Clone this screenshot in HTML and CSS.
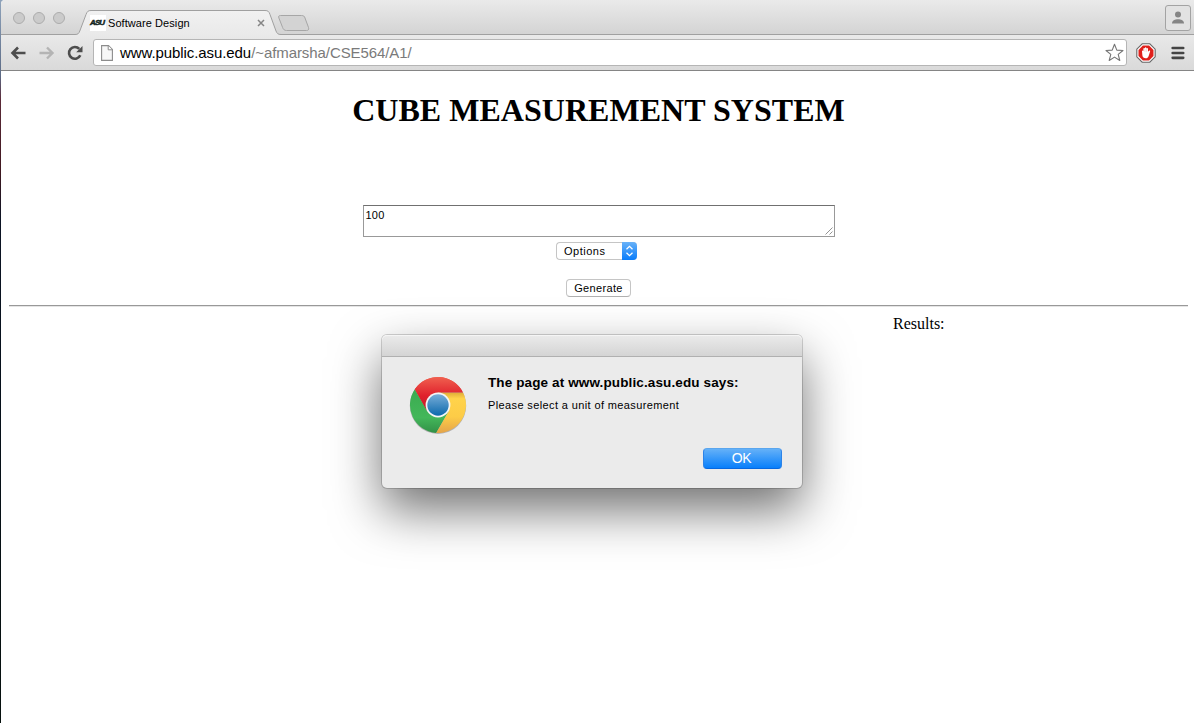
FILE: index.html
```html
<!DOCTYPE html>
<html lang="en">
<head>
<meta charset="utf-8">
<title>Software Design</title>
<link rel="stylesheet" href="styles.css">
</head>
<body>
<div class="desktop">
  <div class="window">
    <header class="tabstrip">
      <div class="lights"><i></i><i></i><i></i></div>
      <div class="tab">
        <svg class="tab-shape" width="206" height="26" viewBox="0 0 206 26">
          <path d="M0 26V24.5C3 24.5 3.8 23.500 4.800 21L11 4.500C12.200 1.500 13 .5 16 .5H190C193 .5 194 1.500 195 4.500L201 21C202 23.500 203 24.500 206 24.500V26Z" fill="url(#tabfill)"/>
          <path d="M0 24.500C3 24.500 3.800 23.500 4.800 21L11 4.500C12.200 1.500 13 .5 16 .5H190C193 .5 194 1.500 195 4.500L201 21C202 23.500 203 24.500 206 24.500" fill="none" stroke="#a0a0a0"/>
          <defs><linearGradient id="tabfill" x2="0" y2="1"><stop stop-color="#f1f1f1"/><stop offset="1" stop-color="#e9e9e9"/></linearGradient></defs>
        </svg>
        <span class="favicon">ASU</span>
        <span class="tab-title">Software Design</span>
        <svg class="tab-close" width="8" height="8" viewBox="0 0 8 8"><path d="M1 1L7 7M7 1L1 7" stroke="#858585" stroke-width="1.500"/></svg>
      </div>
      <svg class="new-tab" width="34" height="18" viewBox="0 0 34 18"><path d="M3.500 1.500H24.500C26.500 1.500 27.500 2.200 28 4L31.500 13.500C32 15.500 31.500 16.500 29.500 16.500H9.500C7.500 16.500 6.300 15.500 5.600 13.500L1.900 4C1.300 2.200 1.800 1.500 3.500 1.500Z" fill="#d3d3d3" stroke="#a6a6a6"/></svg>
      <div class="profile"><svg width="14" height="14" viewBox="0 0 14 14" fill="#858585"><circle cx="7" cy="3.500" r="3"/><path d="M1 12.500C1 9.500 4 8.200 7 8.200S13 9.500 13 12.500Z"/></svg></div>
    </header>
    <nav class="toolbar">
      <svg class="nav-icon" width="16" height="16" viewBox="0 0 16 16"><path d="M15.500 8H2.500M8 2.500L2.500 8L8 13.500" fill="none" stroke="#4d4d4d" stroke-width="2.600"/></svg>
      <svg class="nav-icon forward" width="16" height="16" viewBox="0 0 16 16"><path d="M.5 8H13.500M8 2.500L13.500 8L8 13.500" fill="none" stroke="#b4b4b4" stroke-width="2.400"/></svg>
      <svg class="nav-icon reload" width="16" height="16" viewBox="0 0 16 16"><path d="M12.300 3.900A5.900 5.900 0 1 0 13.300 10.300" fill="none" stroke="#4d4d4d" stroke-width="2.600"/><path d="M15.500 1V7.300H9.200Z" fill="#4d4d4d"/></svg>
      <div class="omnibox">
        <svg class="page-icon" width="12" height="16" viewBox="0 0 12 16"><path d="M.6.6H7.500L11.400 4.500V15.400H.6Z" fill="#f7f7f7" stroke="#8c8c8c" stroke-width="1.100"/><path d="M7.200.8V4.800H11.200" fill="#fff" stroke="#8c8c8c"/></svg>
        <span class="url"><span class="host">www.public.asu.edu</span>/~afmarsha/CSE564/A1/</span>
        <svg class="star" width="19" height="19" viewBox="0 0 19 19"><path d="M9.500 1.300L11.800 7.100L18 7.500L13.200 11.400L14.800 17.500L9.500 14.100L4.200 17.500L5.800 11.400L1 7.500L7.200 7.100Z" fill="#fff" stroke="#757575" stroke-width="1.100" stroke-linejoin="round"/></svg>
      </div>
      <svg class="blocker" width="20" height="20" viewBox="0 0 20 20"><path d="M6.200.8H13.800L19.200 6.200V13.800L13.800 19.200H6.200L.8 13.800V6.200Z" fill="#fff" stroke="#666" stroke-width="1.100"/><path d="M6.900 2.500H13.100L17.500 6.900V13.100L13.100 17.500H6.900L2.500 13.100V6.900Z" fill="#e0201b"/><path d="M6 8.300C6 7.200 7.300 7.200 7.400 8.200V5.800C7.400 4.700 8.900 4.700 8.900 5.800V5C8.900 3.900 10.400 3.900 10.400 5V5.700C10.400 4.700 12 4.700 12 5.800V9L12.600 8C13.300 7 14.500 7.500 14.100 8.500L12.700 12.900C12.100 14.600 11.200 15.300 9.700 15.300C7.800 15.300 6.700 14.300 6.400 12.600Z" fill="#fff"/><path d="M8.900 6V9M10.400 6V9" stroke="#efb0ae" stroke-width=".4"/></svg>
      <svg class="menu" width="14" height="14" viewBox="0 0 14 14"><path d="M1.700 2H12.200M1.700 7H12.200M1.700 11.800H12.200" stroke="#444" stroke-width="2.700" stroke-linecap="round"/></svg>
    </nav>
    <main class="page">
      <h1>CUBE MEASUREMENT SYSTEM</h1>
      <div class="field">100<svg class="grip" width="8" height="8" viewBox="0 0 8 8"><path d="M.5 7.500L7.500 .5M4.500 7.500L7.500 4.500" stroke="#777" stroke-width=".8"/></svg></div>
      <div class="select"><span class="select-label">Options</span><span class="stepper"><svg width="9" height="12" viewBox="0 0 9 12"><path d="M1.500 4.300L4.500 1.400L7.500 4.300M1.500 7.700L4.500 10.600L7.500 7.700" fill="none" stroke="#fff" stroke-width="1.300"/></svg></span></div>
      <button class="generate">Generate</button>
      <hr>
      <div class="results">Results:</div>
    </main>
  </div>
  <section class="dialog" role="alertdialog">
    <div class="dialog-bar"></div>
    <div class="dialog-body">
      <svg class="chrome" width="60" height="60" viewBox="-30 -30 60 60">
        <defs>
          <linearGradient id="red" x2="0" y2="1"><stop stop-color="#f0604f"/><stop offset=".55" stop-color="#e0202c"/><stop offset="1" stop-color="#bf1d2a"/></linearGradient>
          <linearGradient id="green" x2="0" y2="1"><stop stop-color="#3bab50"/><stop offset=".65" stop-color="#43b75a"/><stop offset="1" stop-color="#329047"/></linearGradient>
          <linearGradient id="yellow" x2="0" y2="1"><stop stop-color="#e0ad38"/><stop offset=".15" stop-color="#ffd34b"/><stop offset=".6" stop-color="#fdcc47"/><stop offset="1" stop-color="#e5a44a"/></linearGradient>
          <linearGradient id="blue" x2="0" y2="1"><stop stop-color="#78add8"/><stop offset="1" stop-color="#0c69ac"/></linearGradient>
        </defs>
        <circle cy=".8" r="28.200" fill="#777" opacity=".5"/>
        <path d="M-23.200 -15.700A28 28 0 0 1 24.200 -14H0L-10.700 6.200Z" fill="url(#red)"/>
        <path d="M-23.200 -15.700L-10.700 6.200L10.700 6.200L-1.800 27.940A28 28 0 0 1 -23.200 -15.700Z" fill="url(#green)"/>
        <path d="M0 -12.400H25.100A28 28 0 0 1 -1.800 27.940L10.700 6.200Z" fill="url(#yellow)"/>
        <path d="M-23.200 -15.700A28 28 0 0 1 25.100 -12.400H0L-10.700 6.200Z" fill="url(#red)"/>
        <circle r="12.400" fill="#f5f5f5"/><circle r="10.700" fill="url(#blue)"/>
      </svg>
      <div class="message">
        <h2>The page at www.public.asu.edu says:</h2>
        <p>Please select a unit of measurement</p>
      </div>
      <button class="ok">OK</button>
    </div>
  </section>
</div>
</body>
</html>
```
FILE: styles.css
```css
* { box-sizing: border-box; }
body { margin: 0; font-family: "Liberation Sans", Arial, sans-serif; }
.desktop {
  position: relative;
  height: 723px;
  padding-left: 1px;
  overflow: hidden;
  background: linear-gradient(#8fa3bb 0, #5c6b86 75px, #5b2a38 100px, #401820 170px, #0c1424 220px, #06101a 400px, #07110e 723px);
}
.window { display: flex; flex-direction: column; height: 723px; background: #fff; border-top-left-radius: 4px; overflow: hidden; }
.tabstrip { display: flex; height: 35px; padding-left: 12px; background: linear-gradient(#eaeaea, #d3d3d3); box-shadow: inset 0 -1px #a0a0a0; }
.lights { display: flex; gap: 8px; padding-top: 12px; }
.lights i { width: 12px; height: 12px; border: 1px solid #acacac; border-radius: 50%; background: #cbcbcb; }
.tab { position: relative; display: flex; align-items: flex-start; width: 206px; height: 26px; margin: 10px 0 0 10px; }
.tab-shape { position: absolute; left: 0; top: 0; }
.favicon { position: relative; width: 16px; height: 16px; margin: 5px 0 0 15px; background: #fff; color: #12251d; font-size: 8px; font-weight: bold; font-style: italic; line-height: 16px; letter-spacing: -.9px; -webkit-text-stroke: .5px #12251d; }
.tab-title { position: relative; width: 149px; margin: 5px 0 0 2px; font-size: 11px; line-height: 16px; letter-spacing: .07px; white-space: nowrap; }
.tab-close { position: relative; margin-top: 9px; }
.new-tab { margin: 14px 0 0 -4px; }
.profile { display: flex; align-items: center; justify-content: center; width: 26px; height: 26px; margin: 5px 3px 0 auto; border: 1px solid #a3a3a3; border-radius: 3px; background: #e2e2e2; }
.toolbar { display: flex; align-items: center; height: 36px; padding: 0 9px 1px 9px; background: linear-gradient(#e9e9e9, #d9d9d9); box-shadow: inset 0 -1px #858585; }
.nav-icon { flex: none; }
.forward { margin-left: 13px; }
.reload { margin-left: 11.500px; }
.omnibox { display: flex; align-items: center; width: 1035px; height: 27px; margin-left: 10.500px; padding: 0 2px 0 7px; border: 1px solid #b5b5b5; border-radius: 3px; background: #fff; }
.url { margin-left: 7px; font-size: 15px; letter-spacing: -.08px; line-height: 24px; color: #7a7a7a; white-space: nowrap; }
.host { color: #000; }
.star { margin-left: auto; }
.blocker { margin-left: 9.500px; }
.menu { margin-left: 15px; }
.page { display: flex; flex-direction: column; align-items: center; padding: 0 6px 0 8px; }
h1 { margin: 21px 0 0; font: bold 32px/37px "Liberation Serif", "Times New Roman", serif; letter-spacing: .03px; white-space: nowrap; }
.field { display: flex; justify-content: space-between; align-items: flex-start; width: 472px; height: 32px; margin-top: 76px; padding: 3px 1px 1px 2px; border: 1px solid #999; border-top-color: #707070; font-size: 11px; line-height: 13px; letter-spacing: .25px; }
.grip { align-self: flex-end; }
.select { display: flex; width: 81px; height: 18px; margin: 5px 4px 0 0; border: 1px solid #c5c5c5; border-right: 0; border-radius: 4px; background: #fff; font-size: 11px; }
.select-label { flex: 1; padding-left: 7px; line-height: 16px; letter-spacing: .5px; }
.stepper { display: flex; align-items: center; justify-content: center; width: 15px; height: 18px; margin-top: -1px; border-radius: 0 4px 4px 0; background: linear-gradient(#69b2f8, #087cfb); }
.generate { width: 65px; height: 18px; margin-top: 19px; padding: 0; border: 1px solid #c5c5c5; border-bottom-color: #b0b0b0; border-radius: 4px; background: #fff; color: #000; font: 11px/15px "Liberation Sans", Arial, sans-serif; letter-spacing: .35px; }
hr { width: 1179px; height: 2px; margin: 8px 0 0; border: 0; border-top: 1px solid #999; border-bottom: 1px solid #e5e5e5; }
.results { align-self: flex-start; margin: 8px 0 0 884px; font: 16px/18px "Liberation Serif", "Times New Roman", serif; }
.dialog { position: absolute; left: 382px; top: 335px; width: 420px; height: 153px; border-radius: 5px; background: #ebebeb; box-shadow: 0 0 0 1px rgba(0,0,0,.17), 0 22px 50px rgba(0,0,0,.56); }
.dialog-bar { height: 22px; border-bottom: 1px solid #b0b0b0; border-radius: 5px 5px 0 0; background: linear-gradient(#ebebeb, #d4d4d4); box-shadow: inset 0 1px #f5f5f5; }
.dialog-body { display: grid; grid-template-columns: 60px 1fr; column-gap: 20px; padding: 18px 20px 0 26px; }
h2 { margin: 0; font-size: 13.500px; line-height: 16px; letter-spacing: .12px; white-space: nowrap; }
p { margin: 8px 0 0; font-size: 11px; line-height: 13px; letter-spacing: .38px; white-space: nowrap; }
.ok { grid-column: 2; justify-self: end; width: 79px; height: 21px; margin-top: 13px; padding: 0 2px 0 0; border: 1px solid #2c83e8; border-top-color: #5aa6ee; border-bottom-color: #0768e0; border-radius: 4px; background: linear-gradient(#65b1f8, #087ffb); color: #fff; font: 14px/19px "Liberation Sans", Arial, sans-serif; letter-spacing: -.3px; }
```
